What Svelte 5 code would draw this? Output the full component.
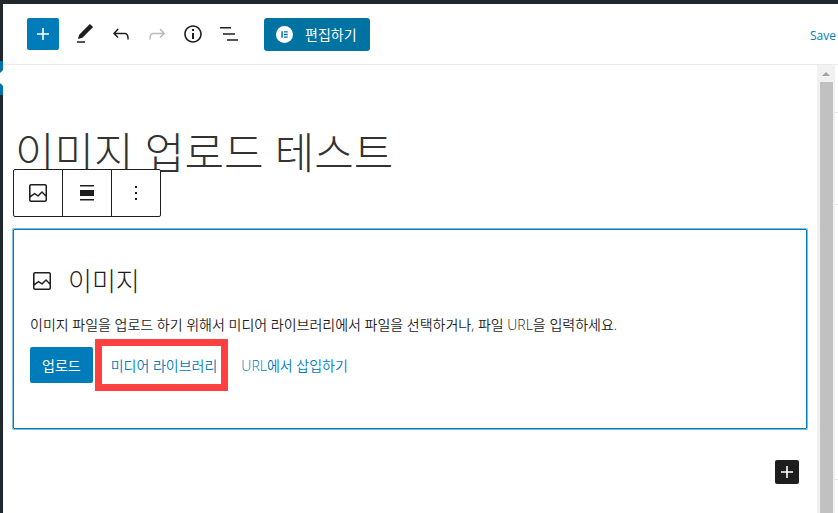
<script>
	let title = '이미지 업로드 테스트';
	let panels = ['status', 'permalink', 'categories'];
</script>


<div class="screen">
	<div class="admin-menu">
		<svg class="current" viewBox="0 0 3 34"><path d="M0 0h3v9L0 12zM0 22l3 3v9H0z"/><path class="notch" d="M3 9v16l-3-3V12z"/></svg>
	</div>

	<div class="editor">
		<header>
			<button class="inserter" aria-label="블록 추가">
				<svg viewBox="0 0 24 24"><path d="M18 11.2h-5.2V6h-1.6v5.2H6v1.6h5.2V18h1.6v-5.2H18z"/></svg>
			</button>
			<button class="tool" aria-label="도구">
				<svg viewBox="0 0 24 24"><path d="M20.1 5.1L16.9 2 6.2 12.7l-1.3 4.4 4.5-1.3L20.1 5.1zM4 20.8h8v-1.5H4v1.5z"/></svg>
			</button>
			<button class="tool" aria-label="실행 취소">
				<svg viewBox="0 0 24 24"><path d="M18.3 11.7c-.6-.6-1.4-.9-2.3-.9H6.7l2.9-3.3-1.1-1-4.5 5L8.5 16l1-1-2.7-2.7H16c.5 0 .9.2 1.3.5 1 1 1 3.4 1 4.5v.3h1.5v-.2c0-1.5 0-4.3-1.5-5.7z"/></svg>
			</button>
			<button class="tool" aria-label="다시 실행" disabled>
				<svg viewBox="0 0 24 24"><path d="M15.6 6.5l-1.1 1 2.9 3.3H8c-.9 0-1.7.3-2.3.9-1.4 1.5-1.4 4.2-1.4 5.6v.2h1.5v-.3c0-1.1 0-3.5 1-4.5.3-.3.7-.5 1.3-.5h9.2L14.5 15l1.1 1.1 4.6-4.6-4.6-5z"/></svg>
			</button>
			<button class="tool" aria-label="세부 정보">
				<svg viewBox="0 0 24 24"><path d="M12 3.2c-4.8 0-8.8 3.9-8.8 8.8 0 4.8 3.9 8.8 8.8 8.8 4.8 0 8.8-3.9 8.8-8.8 0-4.8-4-8.8-8.8-8.8zm0 16c-4 0-7.2-3.3-7.2-7.2C4.8 8 8 4.8 12 4.8s7.2 3.3 7.2 7.2c0 4-3.2 7.2-7.2 7.2zM11 17h2v-6h-2v6zm0-8h2V7h-2v2z"/></svg>
			</button>
			<button class="tool" aria-label="블록 탐색">
				<svg viewBox="0 0 24 24"><path d="M3 5h11v1.5H3zM6 11.2h12v1.5H6zM10 17.3h11v1.5H10z"/></svg>
			</button>
			<button class="elementor">
				<svg viewBox="0 0 16 16">
					<circle cx="8" cy="8" r="8"/>
					<path class="mark" d="M5 5h1.4v6H5zM7.4 5H11v1.2H7.4zM7.4 7.4H11v1.2H7.4zM7.4 9.8H11V11H7.4z"/>
				</svg>
				편집하기
			</button>
			<a class="save" href="#save">Save</a>
		</header>

		<div class="body">
			<main>
				<h1>{title}</h1>

				<section class="block">
					<div class="block-toolbar" role="toolbar" aria-label="블록 도구">
						<button aria-label="이미지">
							<svg viewBox="0 0 24 24"><path d="M19 3H5c-1.1 0-2 .9-2 2v14c0 1.1.9 2 2 2h14c1.1 0 2-.9 2-2V5c0-1.1-.9-2-2-2zM5 4.5h14c.3 0 .5.2.5.5v8.4l-3-2.9c-.3-.3-.8-.3-1 0L11.9 14 9 12c-.3-.2-.6-.2-.8 0l-3.6 2.6V5c-.1-.3.1-.5.4-.5zm14 15H5c-.3 0-.5-.2-.5-.5v-2.4l4.1-3 3 1.9c.3.2.7.2.9-.1L16 12l3.5 3.4V19c0 .3-.2.5-.5.5z"/></svg>
						</button>
						<button aria-label="정렬 변경">
							<svg viewBox="0 0 24 24"><path d="M5 4h14v1.6H5zM5 9h14v6H5zM5 18h14v1.6H5z"/></svg>
						</button>
						<button aria-label="더 많은 옵션">
							<svg viewBox="0 0 24 24"><path d="M11 5h2v2h-2zM11 11h2v2h-2zM11 17h2v2h-2z"/></svg>
						</button>
					</div>

					<h2>
						<svg viewBox="0 0 24 24"><path d="M19 3H5c-1.1 0-2 .9-2 2v14c0 1.1.9 2 2 2h14c1.1 0 2-.9 2-2V5c0-1.1-.9-2-2-2zM5 4.5h14c.3 0 .5.2.5.5v8.4l-3-2.9c-.3-.3-.8-.3-1 0L11.9 14 9 12c-.3-.2-.6-.2-.8 0l-3.6 2.6V5c-.1-.3.1-.5.4-.5zm14 15H5c-.3 0-.5-.2-.5-.5v-2.4l4.1-3 3 1.9c.3.2.7.2.9-.1L16 12l3.5 3.4V19c0 .3-.2.5-.5.5z"/></svg>
						이미지
					</h2>
					<p>이미지 파일을 업로드 하기 위해서 미디어 라이브러리에서 파일을 선택하거나, 파일 URL을 입력하세요.</p>
					<div class="actions">
						<button class="upload">업로드</button>
						<button class="link marked">미디어 라이브러리</button>
						<button class="link">URL에서 삽입하기</button>
					</div>
				</section>

				<button class="appender" aria-label="블록 추가">
					<svg viewBox="0 0 24 24"><path d="M18 11.2h-5.2V6h-1.6v5.2H6v1.6h5.2V18h1.6v-5.2H18z"/></svg>
				</button>
			</main>

			<div class="scrollbar">
				<svg viewBox="0 0 8 4"><path d="M4 0l4 4H0z"/></svg>
				<span class="thumb"></span>
			</div>

			<aside>
				{#each panels as panel (panel)}
					<div class="panel {panel}"></div>
				{/each}
			</aside>
		</div>
	</div>
</div>


<style>
	:global(body) {
		margin: 0;
		background: #fff;
	}

	.screen {
		--blue: #007cba;
		--dark: #1e1e1e;

		box-sizing: border-box;
		min-height: 100vh;
		display: flex;
		border-top: 4px solid #23282d;
		font-family: "Open Sans", "Noto Sans CJK KR", sans-serif;
		font-size: 14px;
		color: var(--dark);
	}

	button {
		display: flex;
		align-items: center;
		justify-content: center;
		padding: 0;
		border: 0;
		background: none;
		color: inherit;
		font: inherit;
		white-space: nowrap;
	}

	svg {
		display: block;
		flex: none;
		width: 24px;
		height: 24px;
		fill: currentColor;
	}

	.admin-menu {
		flex: none;
		width: 3px;
		background: #23282d;
	}

	/* active menu item with its arrow notch */
	.current {
		width: 3px;
		height: 34px;
		margin-top: 57px;
		fill: #0073aa;
	}

	.notch {
		fill: #fff;
	}

	.editor {
		flex: 1;
		min-width: 0;
		display: flex;
		flex-direction: column;
	}

	header {
		display: flex;
		align-items: center;
		height: 60px;
		padding: 0 2px 0 24px;
		border-bottom: 1px solid #e8eaeb;
	}

	.inserter {
		width: 32px;
		height: 32px;
		margin-right: 8px;
		border-radius: 2px;
		background: var(--blue);
		color: #fff;
	}

	.tool {
		width: 36px;
		height: 36px;
	}

	.tool:disabled {
		color: #bbb;
	}

	.elementor {
		gap: 12px;
		height: 33px;
		margin-left: 17px;
		padding: 0 13px 0 12px;
		border-radius: 3px;
		background: #0073a3;
		color: #fff;
	}

	.elementor svg {
		width: 17px;
		height: 17px;
	}

	.mark {
		fill: #0073a3;
	}

	.save {
		margin-left: auto;
		padding-top: 2px;
		color: var(--blue);
		font-size: 12px;
		text-decoration: none;
	}

	.body {
		flex: 1;
		display: flex;
	}

	main {
		flex: 1;
		min-width: 0;
		padding: 58px 10px 0;
	}

	h1 {
		margin: 0 2px 46px;
		font-size: 43px;
		font-weight: 300;
		line-height: 60px;
		color: #333;
	}

	.block {
		position: relative;
		padding: 33px 16px 45px;
		border: 1px solid var(--blue);
		border-radius: 1px;
		box-shadow: 0 0 0 1px #7fbddc;
	}

	.block-toolbar {
		position: absolute;
		top: -61px;
		left: -1px;
		display: flex;
		border: 1px solid var(--dark);
		border-radius: 2px;
		background: #fff;
	}

	.block-toolbar button {
		box-sizing: content-box;
		width: 48px;
		height: 46px;
	}

	.block-toolbar button + button {
		border-left: 1px solid var(--dark);
	}

	h2 {
		display: flex;
		align-items: center;
		gap: 14px;
		margin: 0 0 16px;
		font-size: 26px;
		font-weight: 300;
		line-height: 36px;
	}

	p {
		margin: 0 0 12px;
		line-height: 20px;
		font-weight: 350;
	}

	.actions {
		display: flex;
		align-items: center;
	}

	.upload {
		height: 36px;
		padding: 0 12px;
		border-radius: 2px;
		background: var(--blue);
		color: #fff;
	}

	.link {
		height: 36px;
		padding: 0 12px;
		color: var(--blue);
		font-weight: 350;
	}

	.marked {
		height: 52px;
		margin: -8px 1px -8px 2px;
		padding: 0 4px 0 9px;
		border: 7px solid #ff4040;
	}

	.appender {
		width: 24px;
		height: 24px;
		margin: 31px 8px 0 auto;
		border-radius: 2px;
		background: var(--dark);
		color: #fff;
	}

	.scrollbar {
		display: flex;
		flex-direction: column;
		align-items: center;
		width: 18px;
		background: #f1f1f1;
	}

	.scrollbar svg {
		width: 8px;
		height: 4px;
		margin: 7px 0 6px;
		fill: #a3a3a3;
	}

	.thumb {
		flex: 1;
		width: 13px;
		background: #c1c1c1;
	}

	aside {
		width: 3px;
	}

	.panel {
		box-sizing: border-box;
		height: 92px;
		border-bottom: 1px solid #e2e4e7;
	}

	.status {
		height: 48px;
	}

	.categories {
		height: 275px;
	}
</style>
